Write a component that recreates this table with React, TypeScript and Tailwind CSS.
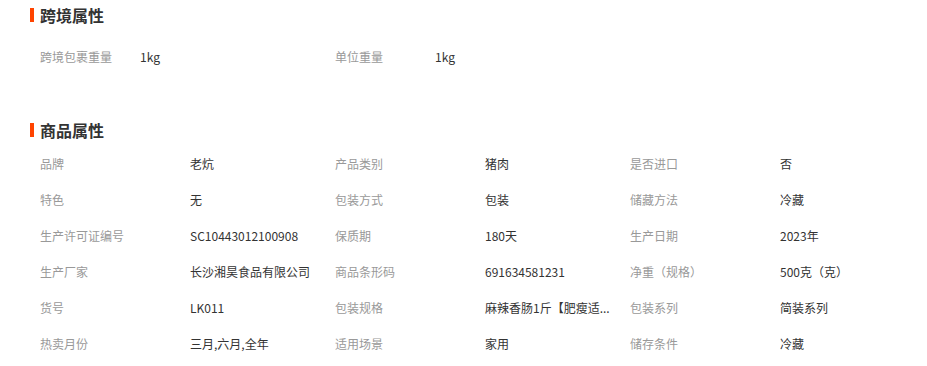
import React from 'react';

type Attr = { label: string; value: string };

const crossBorder: Attr[] = [
    { label: '跨境包裹重量', value: '1kg' },
    { label: '单位重量', value: '1kg' },
];

// values are shown as on the page, the long one already shortened
const productAttrs: Attr[] = [
    { label: '品牌', value: '老炕' },
    { label: '产品类别', value: '猪肉' },
    { label: '是否进口', value: '否' },
    { label: '特色', value: '无' },
    { label: '包装方式', value: '包装' },
    { label: '储藏方法', value: '冷藏' },
    { label: '生产许可证编号', value: 'SC10443012100908' },
    { label: '保质期', value: '180天' },
    { label: '生产日期', value: '2023年' },
    { label: '生产厂家', value: '长沙湘昊食品有限公司' },
    { label: '商品条形码', value: '691634581231' },
    { label: '净重（规格）', value: '500克（克）' },
    { label: '货号', value: 'LK011' },
    { label: '包装规格', value: '麻辣香肠1斤【肥瘦适...' },
    { label: '包装系列', value: '简装系列' },
    { label: '热卖月份', value: '三月,六月,全年' },
    { label: '适用场景', value: '家用' },
    { label: '储存条件', value: '冷藏' },
];

const SectionTitle: React.FC<{ title: string }> = ({ title }) => (
    <div className="flex items-center h-[30px] pl-[30px]">
        <span className="w-[4px] h-[14px] bg-[#ff4400]"></span>
        <h3 className="ml-[6px] text-[16px] font-bold text-[#333]">{title}</h3>
    </div>
);

export default function App() {
    return (
        <div
            className="w-[927px] h-[366px] bg-white overflow-hidden text-[12px]"
            style={{ fontFamily: '"Noto Sans CJK SC", "Noto Sans", sans-serif' }}
        >
            {/* 跨境属性 */}
            <SectionTitle title="跨境属性" />
            <div className="mt-[9px] pl-[40px] flex">
                {crossBorder.map(a => (
                    <div key={a.label} className="w-[295px] h-[36px] flex items-center">
                        <span className="w-[100px] text-[#999]">{a.label}</span>
                        <span className="text-[#333]">{a.value}</span>
                    </div>
                ))}
            </div>

            {/* 商品属性 */}
            <div className="mt-[40px]">
                <SectionTitle title="商品属性" />
                <div className="mt-px pl-[40px] grid grid-cols-[295px_295px_295px]">
                    {productAttrs.map(a => (
                        <div key={a.label} className="h-[36px] flex items-center">
                            <span className="w-[150px] shrink-0 text-[#999]">{a.label}</span>
                            <span className="whitespace-nowrap text-[#333]">{a.value}</span>
                        </div>
                    ))}
                </div>
            </div>
        </div>
    );
}
